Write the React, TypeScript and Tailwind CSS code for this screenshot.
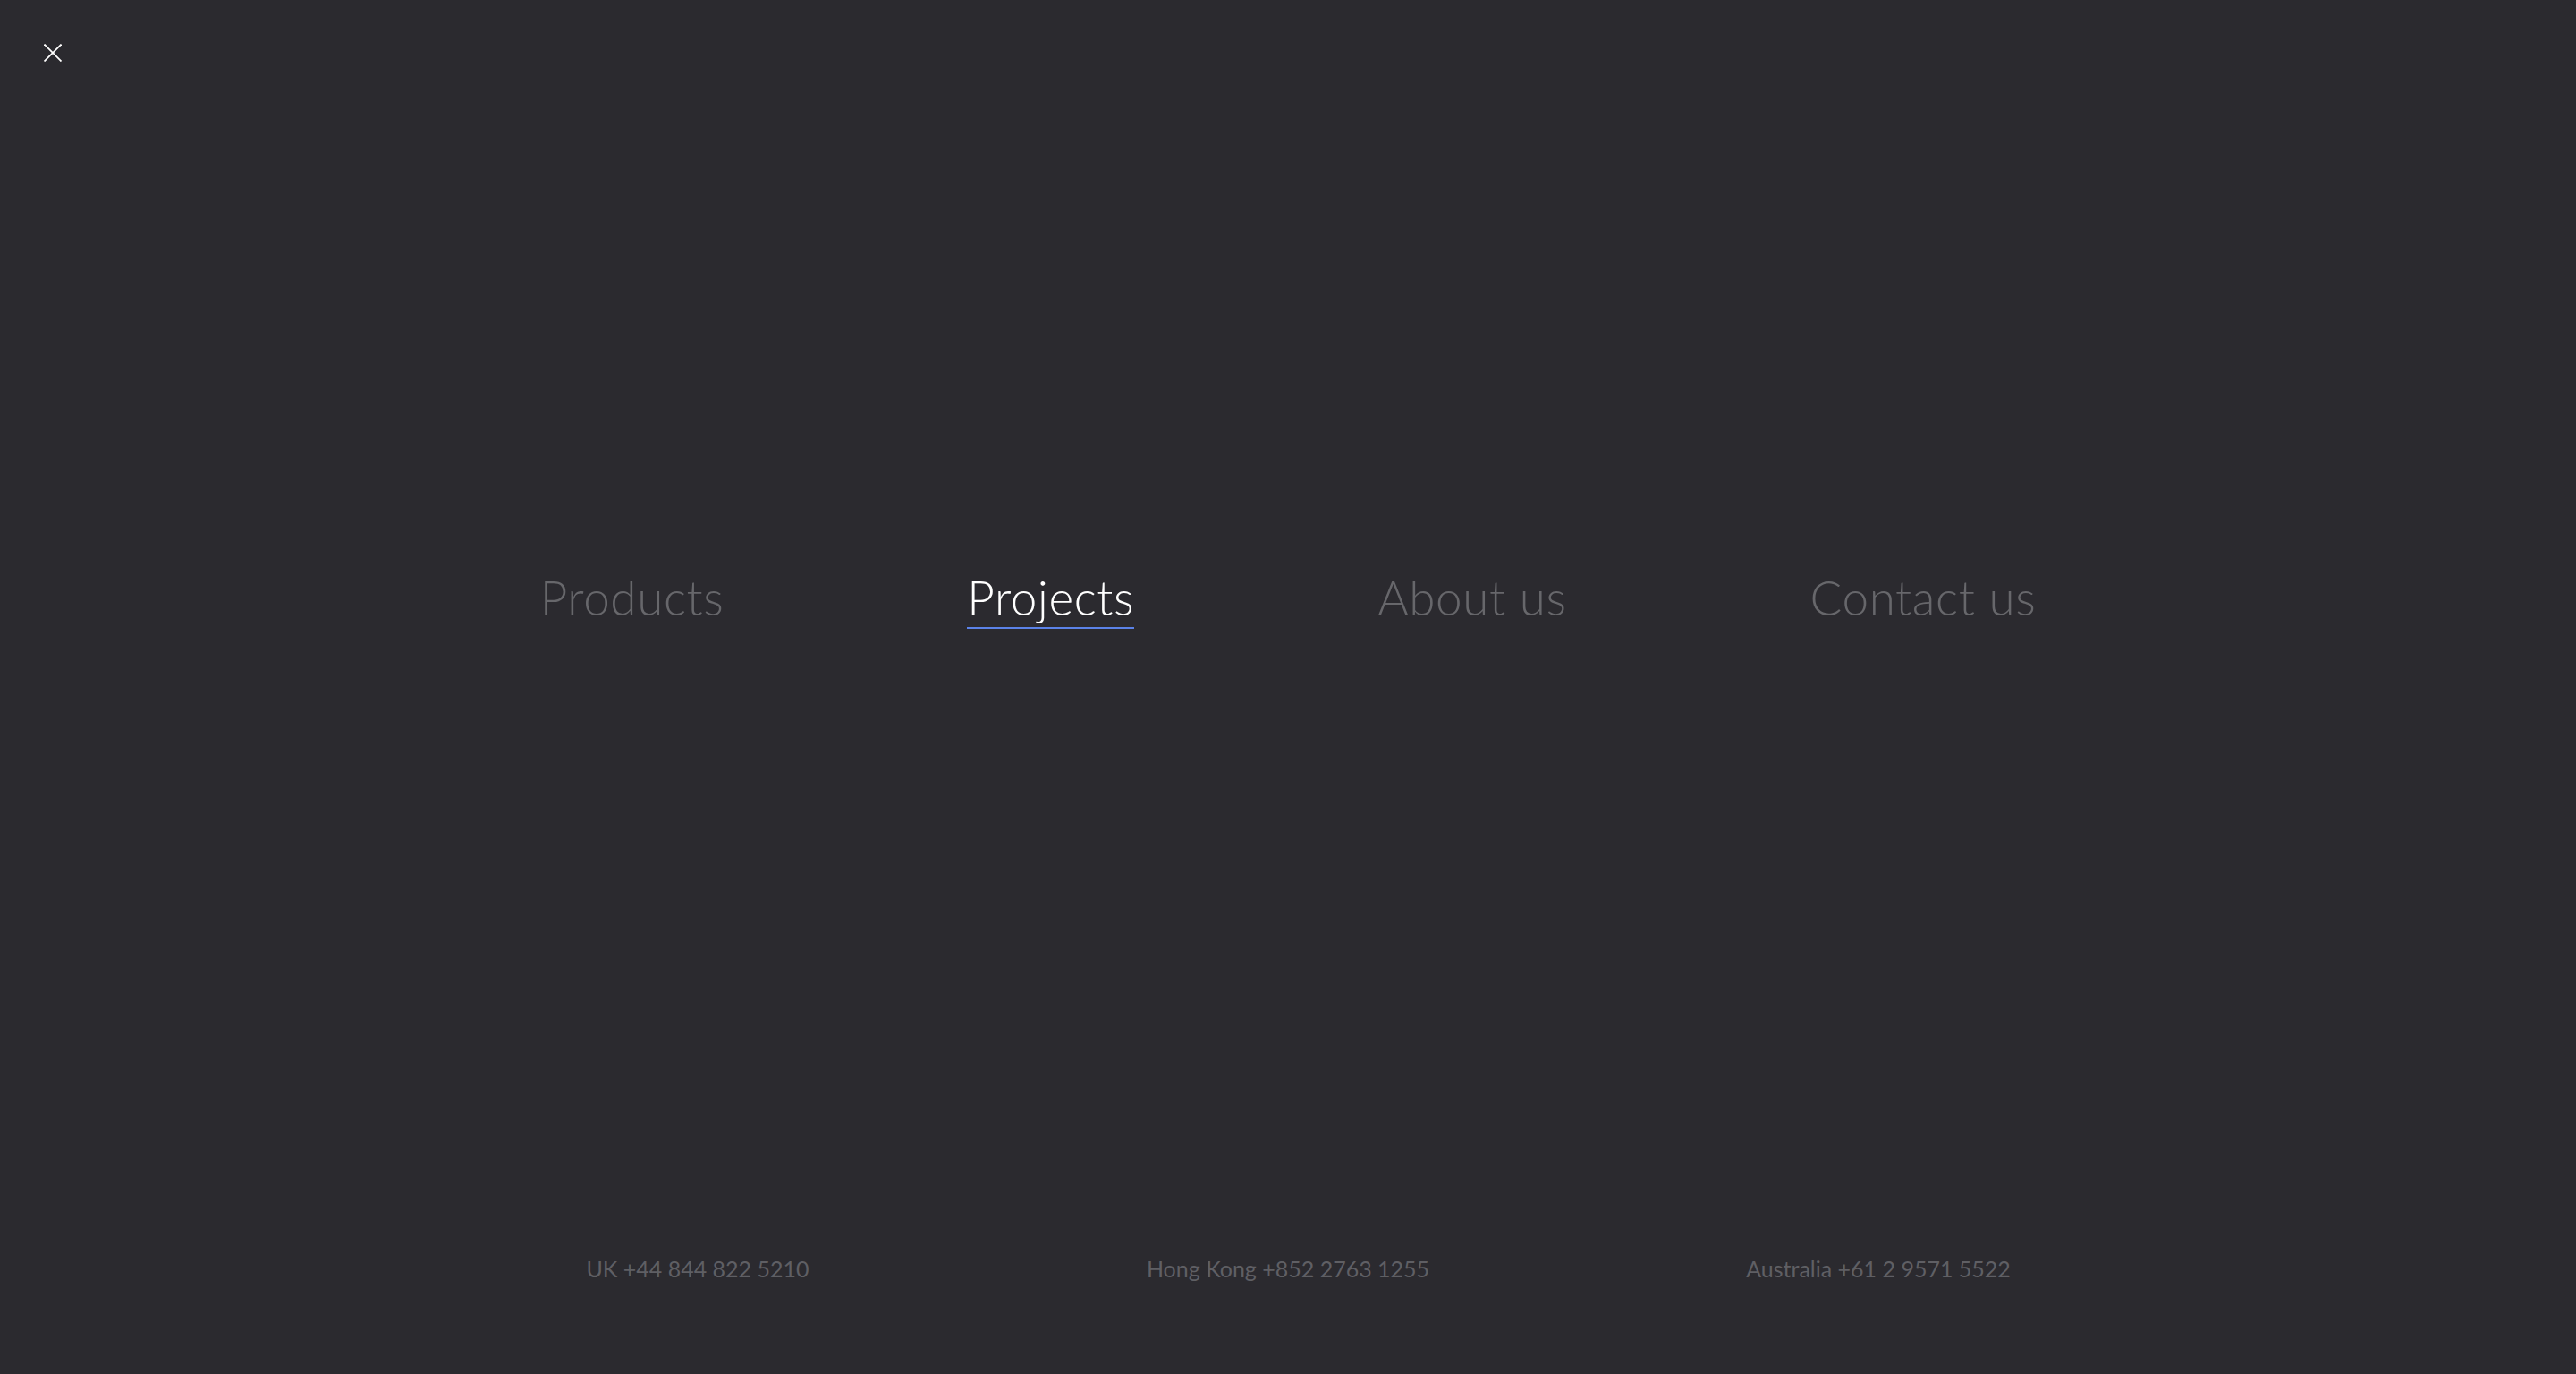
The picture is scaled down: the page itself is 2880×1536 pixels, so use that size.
import React from "react";

export default function App() {
  const nav = [
    { label: "Products", active: false },
    { label: "Projects", active: true },
    { label: "About us", active: false },
    { label: "Contact us", active: false },
  ];
  const phones = ["UK +44 844 822 5210", "Hong Kong +852 2763 1255", "Australia +61 2 9571 5522"];
  return (
    <div
      className="h-[1536px] w-full bg-[#2b2a2f] flex flex-col"
      style={{ fontFamily: "Lato, 'Noto Sans', sans-serif" }}
    >
      <div className="pt-[49px] pl-[49px]">
        <button className="block w-[20px] h-[20px]" aria-label="Close">
          <svg width="20" height="20" viewBox="0 0 20 20" fill="none" stroke="#ffffff" strokeWidth="1.8">
            <line x1="0.5" y1="0.5" x2="19.5" y2="19.5" />
            <line x1="19.5" y1="0.5" x2="0.5" y2="19.5" />
          </svg>
        </button>
      </div>
      <nav className="mt-[572px] flex justify-center items-start gap-[272px]">
        {nav.map((n) => (
          <a
            key={n.label}
            href="#"
            className={
              n.active
                ? "block text-[53px] leading-none tracking-[0.6px] font-light text-white pb-[7px] border-b-2 border-[#5b82e8]"
                : "block text-[53px] leading-none tracking-[0.6px] font-light text-[#67676b]"
            }
          >
            {n.label}
          </a>
        ))}
      </nav>
      <div className="mt-auto mb-[105px] mx-auto w-[1980px] grid grid-cols-3 text-center">
        {phones.map((p) => (
          <div key={p} className="text-[25px] leading-none text-[#5f5f64]">
            {p}
          </div>
        ))}
      </div>
    </div>
  );
}
